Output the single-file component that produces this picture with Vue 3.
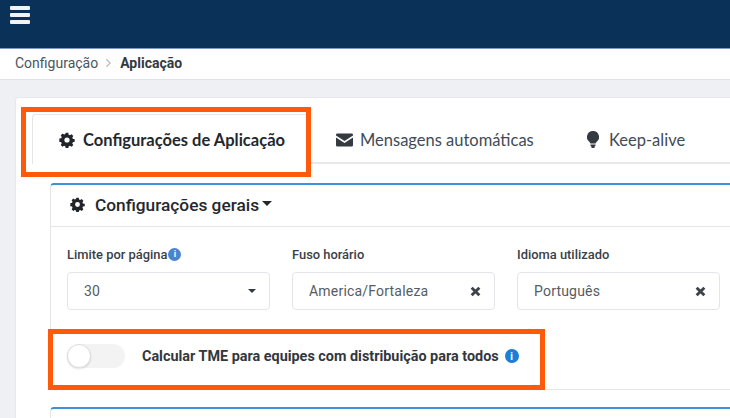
<script setup>
const fields = [
  { label: 'Fuso horário', value: 'America/Fortaleza' },
  { label: 'Idioma utilizado', value: 'Português' }
]
const gear = 'M8 5.4A2.6 2.6 0 1 0 8 10.6 2.6 2.6 0 0 0 8 5.4ZM6.7.8h2.6l.4 1.9 1.2.5 1.6-1 1.8 1.8-1 1.6.5 1.2 1.9.4v2.6l-1.9.4-.5 1.2 1 1.6-1.8 1.8-1.6-1-1.2.5-.4 1.9H6.7l-.4-1.9-1.2-.5-1.6 1-1.8-1.8 1-1.6-.5-1.2-1.9-.4V6.6l1.9-.4.5-1.2-1-1.6 1.8-1.8 1.6 1 1.2-.5Z'
</script>

<template>
  <div class="page">
    <header class="navbar">
      <div class="burger"><span></span><span></span><span></span></div>
    </header>
    <nav class="crumbs">
      <span>Configuração</span>
      <svg class="chev" viewBox="0 0 8 12"><path d="M1.5 1.5 6 6l-4.500 4.500" /></svg>
      <strong>Aplicação</strong>
    </nav>
    <main class="content">
      <section class="card">
        <div class="tabs">
          <div class="tab active">
            <svg class="ic" viewBox="0 0 16 16"><path fill-rule="evenodd" :d="gear" /></svg>
            Configurações de Aplicação
          </div>
          <div class="tab">
            <svg class="ic mail" viewBox="0 0 18 14"><path d="M1.500 0h15A1.500 1.500 0 0 1 18 1.500v.7L9 8 0 2.200v-.7A1.500 1.500 0 0 1 1.500 0ZM0 4.300l9 5.800 9-5.800v8.200a1.500 1.500 0 0 1-1.500 1.500h-15A1.500 1.500 0 0 1 0 12.500Z" /></svg>
            Mensagens automáticas
          </div>
          <div class="tab">
            <svg class="ic bulb" viewBox="0 0 12 17"><path d="M6 0a6 6 0 0 0-3.500 10.900c.5.400.8 1 .9 1.600h5.200c.1-.6.4-1.200.9-1.600A6 6 0 0 0 6 0ZM3.500 13.500h5v1.200l-1 1.100V17h-3v-1.200l-1-1.100Z" /></svg>
            Keep-alive
          </div>
        </div>

        <div class="panel">
          <div class="panel-head">
            <svg class="ic head-ic" viewBox="0 0 16 16"><path fill-rule="evenodd" :d="gear" /></svg>
            <span>Configurações gerais</span>
            <i class="caret"></i>
          </div>
          <div class="panel-body">
            <div class="fields">
              <div class="field">
                <label>Limite por página<span class="info small">i</span></label>
                <div class="box"><span>30</span><i class="caret tiny"></i></div>
              </div>
              <div v-for="f in fields" :key="f.label" class="field">
                <label>{{ f.label }}</label>
                <div class="box">
                  <span>{{ f.value }}</span>
                  <svg class="x" viewBox="0 0 10 10"><path d="M1.500 1.500l7 7M8.500 1.500l-7 7" /></svg>
                </div>
              </div>
            </div>
            <div class="toggle-row">
              <div class="switch"><div class="knob"></div></div>
              <strong>Calcular TME para equipes com distribuição para todos</strong>
              <span class="info">i</span>
            </div>
          </div>
        </div>
        <div class="panel second"></div>
      </section>
    </main>
    <div class="mark mark-tab"></div>
    <div class="mark mark-toggle"></div>
  </div>
</template>

<style>
html, body { margin: 0; padding: 0; }
</style>

<style scoped>
.page {
  position: relative;
  width: 730px;
  height: 418px;
  overflow: hidden;
  background: #eef0f4;
  font-family: Roboto, "Liberation Sans", sans-serif;
  color: #343a40;
}
.navbar {
  height: 49px;
  box-sizing: border-box;
  background: #0a3259;
  border-bottom: 1px solid #7f9cc0;
  padding: 6px 0 0 10px;
}
.burger { display: flex; flex-direction: column; gap: 3.500px; width: 20px; }
.burger span { height: 3.500px; background: #f1f4f8; border-radius: 1px; }
.crumbs {
  height: 31px;
  box-sizing: border-box;
  background: #fff;
  border-bottom: 1px solid #dfe2e6;
  display: flex;
  align-items: center;
  padding: 0 0 3px 15px;
  font-size: 14px;
  color: #4a5560;
}
.crumbs strong { color: #343a40; font-weight: 700; font-size: 14px; }
.chev { width: 7px; height: 10px; margin: 0 8px 0 7px; }
.chev path { fill: none; stroke: #b5b9be; stroke-width: 1.300; }
.content { padding: 17px 0 0 15px; }
.card {
  background: #fff;
  border: 1px solid #e6e8ec;
  border-right: 0;
  border-radius: 3px 0 0 0;
  padding: 16px 0 0 16px;
  height: 340px;
  box-sizing: border-box;
  margin-right: -1px;
}
.tabs {
  display: flex;
  height: 50px;
  box-sizing: border-box;
  border-bottom: 2px solid #e8e9ec;
  font-family: Lato, "Liberation Sans", sans-serif;
  font-size: 16.500px;
  color: #414b57;
}
.tab {
  display: flex;
  align-items: center;
  height: 50px;
  box-sizing: border-box;
  padding: 1px 0 0 26px;
  white-space: nowrap;
}
.tab:nth-child(2) { padding-left: 27px; width: 278px; }
.tab:nth-child(3) { padding-left: 0; }
.tab.active {
  width: 277px;
  background: #fff;
  color: #24282d;
  font-weight: 700;
  font-size: 16.500px;
  border: 1px solid #e3e5e9;
  border-bottom: 0;
  border-radius: 4px 0 0 0;
}
.ic { fill: #212529; flex: none; }
.tab .ic { width: 16px; height: 16px; margin-right: 8px; }
.tab .mail { width: 17px; height: 14px; margin-right: 7px; fill: #343a40; }
.tab .bulb { width: 12px; height: 17px; margin-right: 10px; fill: #343a40; }
.panel {
  background: #fff;
  border: 1px solid #e4e6ea;
  border-top: 2px solid #3e92dd;
  border-right: 0;
  border-radius: 4px 0 0 0;
  margin-left: 18px;
  margin-top: 19px;
}
.panel-head {
  height: 42px;
  box-sizing: border-box;
  border-bottom: 1px solid #e2e4e8;
  display: flex;
  align-items: center;
  padding: 0 0 2px 19px;
  font-size: 17.300px;
  font-weight: 500;
  color: #24282d;
}
.head-ic { width: 15px; height: 15px; margin-right: 10px; }
.caret {
  width: 0;
  height: 0;
  border-left: 5px solid transparent;
  border-right: 5px solid transparent;
  border-top: 5px solid #24282d;
  margin-left: 3px;
  margin-top: -2px;
}
.caret.tiny { border-left-width: 4px; border-right-width: 4px; border-top-width: 4px; margin: 0; border-top-color: #343a40; }
.panel-body { padding: 19px 0 0 16px; height: 162px; box-sizing: border-box; }
.fields { display: grid; grid-template-columns: repeat(3, 202.500px); column-gap: 22.500px; }
.field label {
  display: flex;
  align-items: center;
  height: 16px;
  font-size: 12.900px;
  font-weight: 500;
  color: #3a4048;
  white-space: nowrap;
}
.box {
  margin-top: 10px;
  height: 38px;
  box-sizing: border-box;
  border: 1px solid #e3e5e9;
  border-radius: 4px;
  display: flex;
  align-items: center;
  justify-content: space-between;
  padding: 0 13px 0 16px;
  font-size: 14px;
  color: #555c64;
  letter-spacing: .2px;
}
.x { width: 11px; height: 11px; }
.x path { fill: none; stroke: #3d4349; stroke-width: 2.600; }
.info {
  display: inline-flex;
  align-items: center;
  justify-content: center;
  width: 14px;
  height: 14px;
  border-radius: 50%;
  background: #1d7fd4;
  color: #fff;
  font-size: 10px;
  font-weight: 700;
  font-style: normal;
  margin-left: 6px;
}
.info.small { width: 13px; height: 13px; background: #4a84cf; margin-left: 1px; font-size: 9px; }
.toggle-row {
  display: flex;
  align-items: center;
  margin-top: 33px;
  height: 26px;
  font-size: 14.400px;
  color: #32373d;
}
.toggle-row strong { font-weight: 700; white-space: nowrap; }
.switch {
  width: 58px;
  height: 24px;
  border-radius: 12px;
  background: #f3f3f4;
  margin-right: 17px;
  flex: none;
  display: flex;
  align-items: center;
}
.knob {
  width: 24px;
  height: 24px;
  box-sizing: border-box;
  border: 1px solid #dcdde0;
  border-radius: 50%;
  background: #fff;
  box-shadow: 0 1px 2px rgba(0, 0, 0, .12);
}
.panel.second { margin-top: 17px; height: 40px; }
.mark {
  position: absolute;
  box-sizing: border-box;
  border: 5px solid #ff5a0a;
  pointer-events: none;
}
.mark-tab { left: 21px; top: 107px; width: 290px; height: 70px; }
.mark-toggle { left: 48px; top: 329px; width: 497px; height: 61px; }
</style>
